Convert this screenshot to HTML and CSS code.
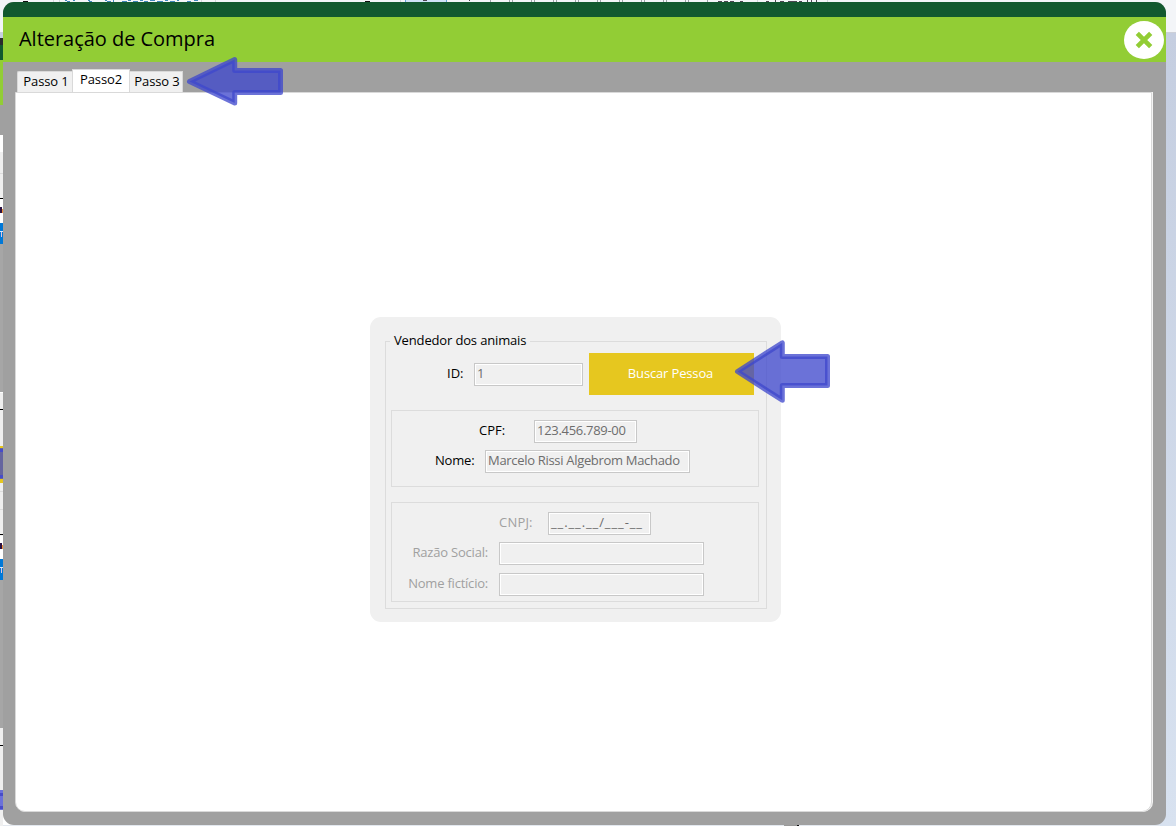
FILE: index.html
```
<!DOCTYPE html>
<html lang="pt-BR">
<head>
<meta charset="utf-8">
<title>Alteração de Compra</title>
<link rel="stylesheet" href="styles.css">
</head>
<body>
<svg class="backdrop" width="1176" height="826" shape-rendering="crispEdges" aria-hidden="true">
  <rect width="1176" height="33" fill="#f3f5f8"/>
  <rect y="32" width="1176" height="1" fill="#cdd0d8"/>
  <linearGradient id="sky" x1="0" y1="0" x2="0" y2="1"><stop offset="0" stop-color="#c5cee0"/><stop offset="1" stop-color="#d8e2f0"/></linearGradient>
  <rect x="1150" y="33" width="26" height="793" fill="url(#sky)"/>
  <rect y="825" width="1160" height="1" fill="#e3e8ef"/>
  <rect x="784" y="825" width="14" height="1" fill="#999"/>
  <path d="M23 1.500h5M365 1.500h5M797 825.500h2" stroke="#111"/>
  <path d="M53.500 0v2M59.500 0v2M201.500 0v2M215.500 0v2M400.500 0v2M757.500 0v2M827.500 0v2" stroke="#d3d7db"/>
  <rect x="405" width="42" height="2" fill="#cfe3f7"/>
  <path d="M405.500 0v2M446.500 0v2" stroke="#64a0d8"/>
  <path d="M65 .5h2M67 1.500h3M73 .5h2M88 .5h2M89 1.500h3M105 .5h2M107 1.500h4M113 0v2M122 1.500h5M128 .5h3M133 1.500h5M140 .5h3M144 1.500h4M150 .5h5M157 1.500h6M165 .5h3M170 1.500h5M177 .5h2M187 1.500h4M194 .5h4" stroke="#4287bc"/>
  <path d="M423 .5h4M469 0v1M718 1.500h4M724 1.500h4M730 1.500h4M740 1.500h3M766 1.500h3M775 0v2M780 1.500h4M788 1.500h9M799 1.500h3M807 0v2M811 0v2M816 0v2" stroke="#4e4652"/>
  <path d="M490.500 0v2M509.500 0v2M512.500 0v2M531.500 0v2M534.500 0v2M553.500 0v2M556.500 0v2M575.500 0v2M578.500 0v2M597.500 0v2M600.500 0v2M619.500 0v2M622.500 0v2M641.500 0v2M644.500 0v2M663.500 0v2M666.500 0v2M685.500 0v2M688.500 0v2M707.500 0v2" stroke="#9da2a8"/>
  <rect y="33" width="3" height="5" fill="#c6cee0"/>
  <rect y="38" width="3" height="7" fill="#292b2d"/>
  <rect y="45" width="3" height="15" fill="#12592f"/>
  <rect y="60" width="3" height="45" fill="#92cd35"/>
  <rect y="105" width="3" height="30" fill="#a0a0a0"/>
  <rect y="135" width="3" height="17" fill="#fff"/>
  <rect y="152" width="3" height="71" fill="#efefef"/>
  <rect y="173" width="3" height="1" fill="#dcdcdc"/>
  <rect y="198" width="3" height="1" fill="#000"/>
  <rect y="199" width="3" height="24" fill="#fff"/>
  <rect y="207" width="2" height="6" fill="#2c1040"/>
  <rect x="2" y="209" width="1" height="4" fill="#f08f36"/>
  <rect y="223" width="3" height="21" fill="#0078d7"/>
  <rect y="231" width="3" height="1" fill="#d8eaff"/>
  <rect x="1" y="232" width="1" height="5" fill="#e7c3d8"/>
  <rect y="244" width="3" height="148" fill="#a6a6a6"/>
  <rect y="392" width="3" height="1" fill="#fff"/>
  <rect y="393" width="3" height="143" fill="#efefef"/>
  <rect y="409" width="3" height="1" fill="#000"/>
  <rect y="446" width="3" height="37" fill="#e6c71f"/>
  <rect y="448" width="3" height="31" fill="#65659f"/>
  <path d="M0 450.500h3M0 476.500h3" stroke="#474cc9" stroke-width="3"/>
  <path d="M0 491.500h3M0 509.500h3" stroke="#dcdcdc"/>
  <rect y="534" width="3" height="1" fill="#000"/>
  <rect y="536" width="3" height="22" fill="#fff"/>
  <rect y="543" width="2" height="6" fill="#2c1040"/>
  <rect x="2" y="545" width="1" height="4" fill="#f08f36"/>
  <rect y="559" width="3" height="21" fill="#0078d7"/>
  <rect y="567" width="3" height="1" fill="#d8eaff"/>
  <rect x="1" y="568" width="1" height="5" fill="#e7c3d8"/>
  <rect y="580" width="3" height="148" fill="#a6a6a6"/>
  <rect y="728" width="3" height="98" fill="#efefef"/>
  <rect y="745" width="3" height="1" fill="#000"/>
  <rect y="790" width="3" height="20" fill="#6b71d9"/>
  <path d="M0 794.500h3M0 807.500h3" stroke="#474cc9" stroke-width="3"/>
</svg>

<main class="window">
  <div class="topbar"></div>
  <header class="header">
    <h1 class="title">Alteração de Compra</h1>
    <button class="close" type="button" aria-label="Fechar">
      <svg width="40" height="38" viewBox="0 0 40 38"><ellipse cx="20" cy="19" rx="20" ry="19" fill="#fff"/><path d="M13.300 12.300 26.700 25.700M26.700 12.300 13.300 25.700" stroke="#92cd35" stroke-width="4.600"/></svg>
    </button>
  </header>
  <nav class="tabs">
    <span class="tab tab-first">Passo 1</span>
    <span class="tab tab-active">Passo2</span>
    <span class="tab tab-last">Passo 3</span>
  </nav>
  <section class="panel">
    <form class="card">
      <fieldset class="seller">
        <legend class="legend"><span class="legend-text">Vendedor dos animais</span></legend>
        <div class="row row-id">
          <label class="label">ID:</label>
          <span class="field field-id">1</span>
          <button class="search" type="button">Buscar Pessoa</button>
        </div>
        <div class="group group-person">
          <div class="row row-cpf"><label class="label">CPF:</label><span class="field field-short field-cpf">123.456.789-00</span></div>
          <div class="row row-name"><label class="label label-name">Nome:</label><span class="field field-long field-name">Marcelo Rissi Algebrom Machado</span></div>
        </div>
        <div class="group group-company">
          <div class="row row-cnpj"><label class="label">CNPJ:</label><span class="field field-short field-cnpj">__.__.__/___-__</span></div>
          <div class="row row-company"><label class="label label-social">Razão Social:</label><span class="field field-long"></span></div>
          <div class="row row-company row-alias"><label class="label label-alias">Nome fictício:</label><span class="field field-long"></span></div>
        </div>
      </fieldset>
    </form>
  </section>
</main>

<svg class="arrows" width="1176" height="826" aria-hidden="true">
  <path class="arrow" d="M189.500 81.500 234.700 59.500V70.500H280.500V92.500H234.700V103Z"/>
  <path class="arrow" d="M737.500 371.500 782.300 342.800V356.500H827.500V385.500H782.300V400.200Z"/>
</svg>
</body>
</html>
```
FILE: styles.css
```
* { box-sizing: border-box; }
body {
  margin: 0;
  width: 1176px;
  height: 826px;
  overflow: hidden;
  position: relative;
  background: #fff;
  font-family: "Open Sans", "Noto Sans", sans-serif;
  font-size: 13px;
  color: #000;
}
.backdrop, .arrows { position: absolute; left: 0; top: 0; pointer-events: none; }
.window {
  position: relative;
  width: 1163px;
  height: 823px;
  margin: 2px 0 0 3px;
  display: flex;
  flex-direction: column;
  overflow: hidden;
  border-radius: 11px;
  background: #a0a0a0;
}
.topbar { height: 15px; background: #12592f; }
.header {
  height: 45px;
  display: flex;
  justify-content: space-between;
  align-items: center;
  padding: 0 2px 0 16px;
  background: #92cd35;
}
.title { margin: 0 0 2px; font-size: 20px; font-weight: 400; line-height: 43px; letter-spacing: -.03px; }
.close { width: 40px; height: 38px; padding: 0; border: 0; background: none; }
.close svg { display: block; }
.tabs { height: 30px; display: flex; align-items: flex-end; padding-left: 14px; }
.tab {
  height: 21px;
  padding-left: 2px;
  line-height: 18px;
  border-top: 1px solid #d9d9d9;
  background: #f0f0f0;
  text-align: center;
  white-space: nowrap;
  letter-spacing: -.1px;
}
.tab-first { width: 55px; border-left: 1px solid #d9d9d9; border-top-left-radius: 2px; }
.tab-active { width: 58px; height: 23px; padding-left: 0; background: #fff; border-left: 1px solid #d9d9d9; border-right: 1px solid #d9d9d9; }
.tab-last { width: 53px; border-right: 1px solid #d9d9d9; }
.panel {
  width: 1137px;
  height: 720px;
  margin-left: 12px;
  padding: 224px 0 0 354px;
  border: 1px solid #d9d9d9;
  border-radius: 0 0 10px 10px;
  background: #fff;
  box-shadow: 1px 0 0 #f4f4f4;
}
.card {
  width: 411px;
  height: 305px;
  padding: 16px 14px 13px 15px;
  border-radius: 11px;
  background: #f0f0f0;
}
.seller {
  margin: 0;
  padding: 0 7px 0 5px;
  width: 382px;
  height: 276px;
  min-width: 0;
  border: 1px solid #dcdcdc;
}
.legend { padding: 0 4px; margin-left: -1px; height: 16px; line-height: 16px; white-space: nowrap; letter-spacing: -.15px; }
.legend-text { display: block; line-height: 14px; }
.row { display: flex; }
.row-id { height: 42px; margin-top: 4px; padding-left: 56px; }
.row-id .label { width: 16px; margin-right: 11px; margin-top: 10px; }
.row-id .field { margin-top: 10px; }
.label { flex: none; line-height: 21px; white-space: nowrap; }
.field {
  flex: none;
  height: 23px;
  padding-left: 2px;
  line-height: 19px;
  border: 1px solid #c8c8c8;
  box-shadow: inset 0 0 0 1px #fff;
  color: #6d6d6d;
  white-space: nowrap;
}
.field-id { width: 109px; }
.field-short { width: 103px; }
.field-long { width: 205px; }
.field-cpf { letter-spacing: -.3px; }
.field-name { letter-spacing: -.31px; }
.field-cnpj { letter-spacing: .9px; }
.label-name { letter-spacing: -.2px; }
.label-social { letter-spacing: -.2px; }
.label-alias { letter-spacing: -.22px; }
.search {
  width: 165px;
  height: 42px;
  margin-left: 6px;
  padding: 0 2px 3px 0;
  border: 0;
  background: #e6c71f;
  color: #fff;
  font: inherit;
  letter-spacing: -.15px;
}
.group { width: 368px; border: 1px solid #dcdcdc; }
.group-person { height: 77px; margin-top: 15px; padding-top: 9px; }
.row-cpf { padding-left: 87px; }
.row-cpf .label { width: 55px; }
.row-name { margin-top: 7px; padding-left: 43px; }
.row-name .label { width: 50px; }
.group-company { height: 100px; margin-top: 15px; padding-top: 9px; color: #a0a0a0; }
.row-cnpj { padding-left: 107px; }
.row-cnpj .label { width: 49px; letter-spacing: .2px; }
.row-company { margin-top: 7px; }
.row-company .label { width: 107px; padding-right: 11px; text-align: right; }
.row-alias { margin-top: 8px; }
.arrow { fill: rgba(63, 72, 204, .77); stroke: rgba(63, 72, 204, .77); stroke-width: 5; stroke-linejoin: round; }
```
